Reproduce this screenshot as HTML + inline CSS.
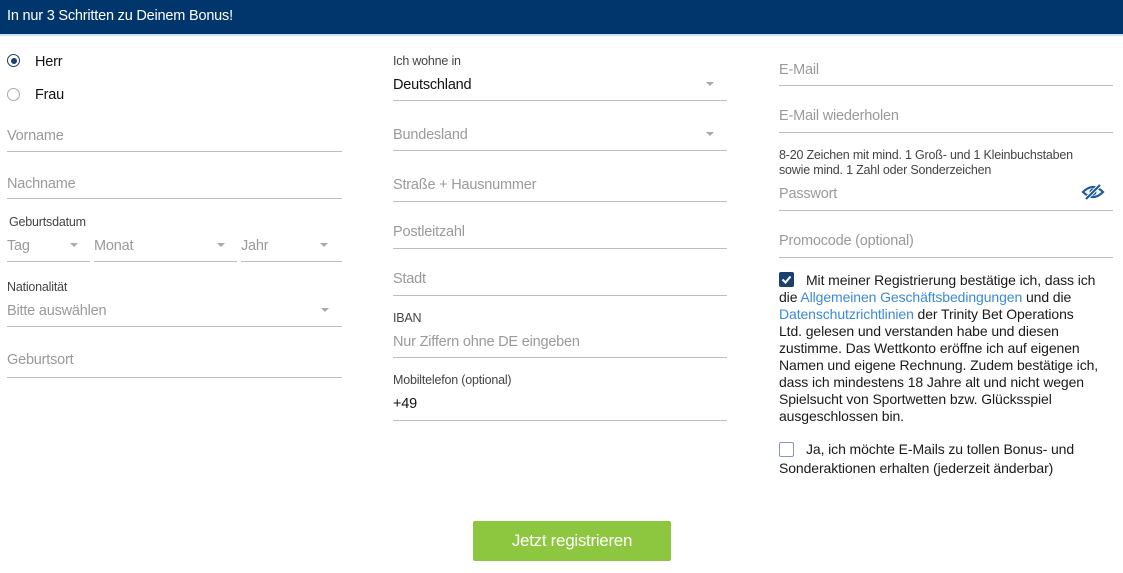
<!DOCTYPE html>
<html><head><meta charset="utf-8"><style>
body{margin:0;width:1123px;height:573px;background:#fff;font-family:"Liberation Sans",sans-serif;position:relative;overflow:hidden}
.a{position:absolute;white-space:nowrap}
.hd{position:absolute;left:0;top:0;width:1123px;height:36px;background:#00366b;border-bottom:2px solid #cfe0ef;box-sizing:border-box}
.ln{position:absolute;height:1px;background:#bdbdbd}
.ph,.v,.lb{margin-top:2px}
.ph{position:absolute;font-size:14.5px;color:#9a9a9a;white-space:nowrap;letter-spacing:-0.2px}
.v{position:absolute;font-size:14.5px;color:#111;white-space:nowrap;letter-spacing:-0.2px}
.lb{position:absolute;font-size:12.5px;color:#444;white-space:nowrap;letter-spacing:-0.2px}
.ar{position:absolute;width:0;height:0;border-left:4px solid transparent;border-right:4px solid transparent;border-top:4px solid #aaa}
.t{position:absolute;left:779px;width:340px;font-size:14px;line-height:17px;color:#1a1a1a;letter-spacing:-0.1px;white-space:nowrap}
.t a{color:#3a8ad6;text-decoration:none}
</style></head><body>
<div class="hd"></div>
<div class="a" style="left:7px;top:8px;font-size:14.5px;color:#fff;letter-spacing:-0.2px">In nur 3 Schritten zu Deinem Bonus!</div>

<div class="a" style="left:7px;top:54px;width:11px;height:11px;border:1.5px solid #1d3f6e;border-radius:50%"></div>
<div class="a" style="left:11px;top:58px;width:6px;height:6px;background:#1d3f6e;border-radius:50%"></div>
<div class="v" style="left:35px;top:52px">Herr</div>
<div class="a" style="left:7px;top:88px;width:11px;height:11px;border:1.5px solid #aaa;border-radius:50%"></div>
<div class="v" style="left:35px;top:85px">Frau</div>

<div class="ph" style="left:7px;top:126px">Vorname</div><div class="ln" style="left:7px;top:151px;width:335px"></div>
<div class="ph" style="left:7px;top:174px">Nachname</div><div class="ln" style="left:7px;top:198px;width:335px"></div>
<div class="lb" style="left:9px;top:213px">Geburtsdatum</div>
<div class="ph" style="left:7px;top:236px">Tag</div><div class="ar" style="left:70px;top:243px"></div><div class="ln" style="left:7px;top:261px;width:83px"></div>
<div class="ph" style="left:94px;top:236px">Monat</div><div class="ar" style="left:217px;top:243px"></div><div class="ln" style="left:94px;top:261px;width:143px"></div>
<div class="ph" style="left:241px;top:236px">Jahr</div><div class="ar" style="left:320px;top:243px"></div><div class="ln" style="left:241px;top:261px;width:101px"></div>
<div class="lb" style="left:7px;top:278px">Nationalität</div>
<div class="ph" style="left:7px;top:301px">Bitte auswählen</div><div class="ar" style="left:321px;top:308px"></div><div class="ln" style="left:7px;top:326px;width:335px"></div>
<div class="ph" style="left:7px;top:350px">Geburtsort</div><div class="ln" style="left:7px;top:377px;width:335px"></div>

<div class="lb" style="left:393px;top:52px">Ich wohne in</div>
<div class="v" style="left:393px;top:75px">Deutschland</div><div class="ar" style="left:706px;top:82px"></div><div class="ln" style="left:393px;top:100px;width:334px"></div>
<div class="ph" style="left:393px;top:125px">Bundesland</div><div class="ar" style="left:706px;top:132px"></div><div class="ln" style="left:393px;top:150px;width:334px"></div>
<div class="ph" style="left:393px;top:175px">Straße + Hausnummer</div><div class="ln" style="left:393px;top:201px;width:334px"></div>
<div class="ph" style="left:393px;top:222px">Postleitzahl</div><div class="ln" style="left:393px;top:248px;width:334px"></div>
<div class="ph" style="left:393px;top:269px">Stadt</div><div class="ln" style="left:393px;top:295px;width:334px"></div>
<div class="lb" style="left:393px;top:309px">IBAN</div>
<div class="ph" style="left:393px;top:332px">Nur Ziffern ohne DE eingeben</div><div class="ln" style="left:393px;top:357px;width:334px"></div>
<div class="lb" style="left:393px;top:371px">Mobiltelefon (optional)</div>
<div class="v" style="left:393px;top:394px">+49</div><div class="ln" style="left:393px;top:420px;width:334px"></div>

<div class="ph" style="left:779px;top:60px">E-Mail</div><div class="ln" style="left:779px;top:85px;width:334px"></div>
<div class="ph" style="left:779px;top:106px">E-Mail wiederholen</div><div class="ln" style="left:779px;top:132px;width:334px"></div>
<div class="lb" style="left:779px;top:146px;line-height:15px;color:#444">8-20 Zeichen mit mind. 1 Groß- und 1 Kleinbuchstaben<br>sowie mind. 1 Zahl oder Sonderzeichen</div>
<div class="ph" style="left:779px;top:184px">Passwort</div>
<svg class="a" style="left:1081px;top:183px" width="24" height="18" viewBox="0 0 24 18"><path d="M2 9 Q12 -1 22 9 Q12 19 2 9Z" fill="none" stroke="#1d5a9e" stroke-width="2.2"/><circle cx="12" cy="9" r="3.5" fill="#1d5a9e"/><path d="M5 16 L19 2" stroke="#fff" stroke-width="4"/><path d="M5 16 L19 2" stroke="#1d5a9e" stroke-width="2.2"/></svg>
<div class="ln" style="left:779px;top:210px;width:334px"></div>
<div class="ph" style="left:779px;top:231px">Promocode (optional)</div><div class="ln" style="left:779px;top:257px;width:334px"></div>

<div class="a" style="left:779px;top:272px;width:15px;height:15px;background:#1d3f6e;border-radius:2px"></div>
<svg class="a" style="left:779px;top:272px" width="15" height="15"><path d="M3.5 7.5 L6.5 10.5 L11.5 4.5" stroke="#fff" stroke-width="2" fill="none"/></svg>
<div class="t" style="top:272px"><span style="margin-left:27px"></span>Mit meiner Registrierung bestätige ich, dass ich<br>die <a>Allgemeinen Geschäftsbedingungen</a> und die<br><a>Datenschutzrichtlinien</a> der Trinity Bet Operations<br>Ltd. gelesen und verstanden habe und diesen<br>zustimme. Das Wettkonto eröffne ich auf eigenen<br>Namen und eigene Rechnung. Zudem bestätige ich,<br>dass ich mindestens 18 Jahre alt und nicht wegen<br>Spielsucht von Sportwetten bzw. Glücksspiel<br>ausgeschlossen bin.</div>
<div class="a" style="left:779px;top:442px;width:13px;height:13px;border:1.5px solid #8899b0;border-radius:2px"></div>
<div class="t" style="top:440px;line-height:19px"><span style="margin-left:27px"></span>Ja, ich möchte E-Mails zu tollen Bonus- und<br>Sonderaktionen erhalten (jederzeit änderbar)</div>

<div class="a" style="left:473px;top:521px;width:198px;height:40px;background:#8dc63f;border-radius:2px;color:#fff;font-size:17px;line-height:40px;text-align:center;letter-spacing:-0.3px">Jetzt registrieren</div>
</body></html>
